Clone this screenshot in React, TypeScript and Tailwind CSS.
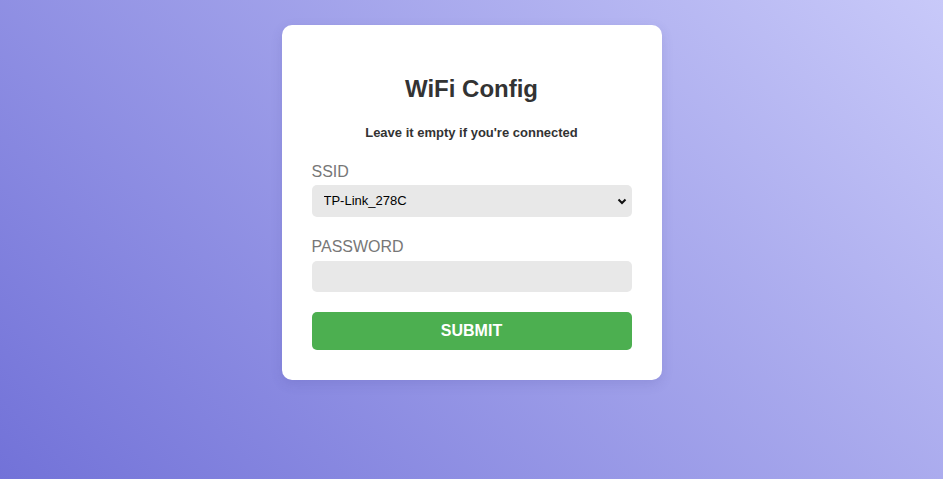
import { useState } from "react";

export default function App() {
  const [ssid, setSsid] = useState("TP-Link_278C");
  const [password, setPassword] = useState("");

  return (
    <div className="flex min-h-[479px] w-full justify-center bg-[linear-gradient(45deg,#7272d8,#c8c9f9)] font-['Liberation_Sans',Arial,sans-serif]">
      <form
        onSubmit={(e) => e.preventDefault()}
        className="mt-[25px] mb-auto flex w-[380px] flex-col rounded-[10px] bg-white px-[30px] pt-[50px] pb-[30px] shadow-[0_4px_12px_rgba(60,60,140,0.15)]"
      >
        <h2 className="text-center text-[24px] leading-[28px] font-bold text-[#333]">WiFi Config</h2>
        <p className="mt-[22px] text-center text-[13px] leading-[15px] font-bold text-[#333]">
          Leave it empty if you're connected
        </p>

        <label className="mt-[23px] text-[16px] leading-[18px] text-[#777]">SSID</label>
        <div className="relative mt-[4px]">
          <select
            value={ssid}
            onChange={(e) => setSsid(e.target.value)}
            className="h-[32px] w-full appearance-none rounded-[5px] bg-[#e8e8e8] pl-[12px] text-[13px] text-black outline-none"
          >
            <option>TP-Link_278C</option>
          </select>
          <svg
            className="pointer-events-none absolute top-[13px] right-[5px]"
            width="10"
            height="7"
            viewBox="0 0 10 7"
          >
            <path d="M1.5 1.5 L5 5 L8.5 1.5" fill="none" stroke="#111" strokeWidth="2" />
          </svg>
        </div>

        <label className="mt-[21px] text-[16px] leading-[18px] text-[#777]">PASSWORD</label>
        <input
          type="password"
          value={password}
          onChange={(e) => setPassword(e.target.value)}
          className="mt-[5px] h-[31px] w-full rounded-[5px] bg-[#e8e8e8] px-[12px] text-[13px] outline-none"
        />

        <button
          type="submit"
          className="mt-[20px] h-[38px] w-full rounded-[5px] bg-[#4caf50] text-[16px] font-bold text-white"
        >
          SUBMIT
        </button>
      </form>
    </div>
  );
}
